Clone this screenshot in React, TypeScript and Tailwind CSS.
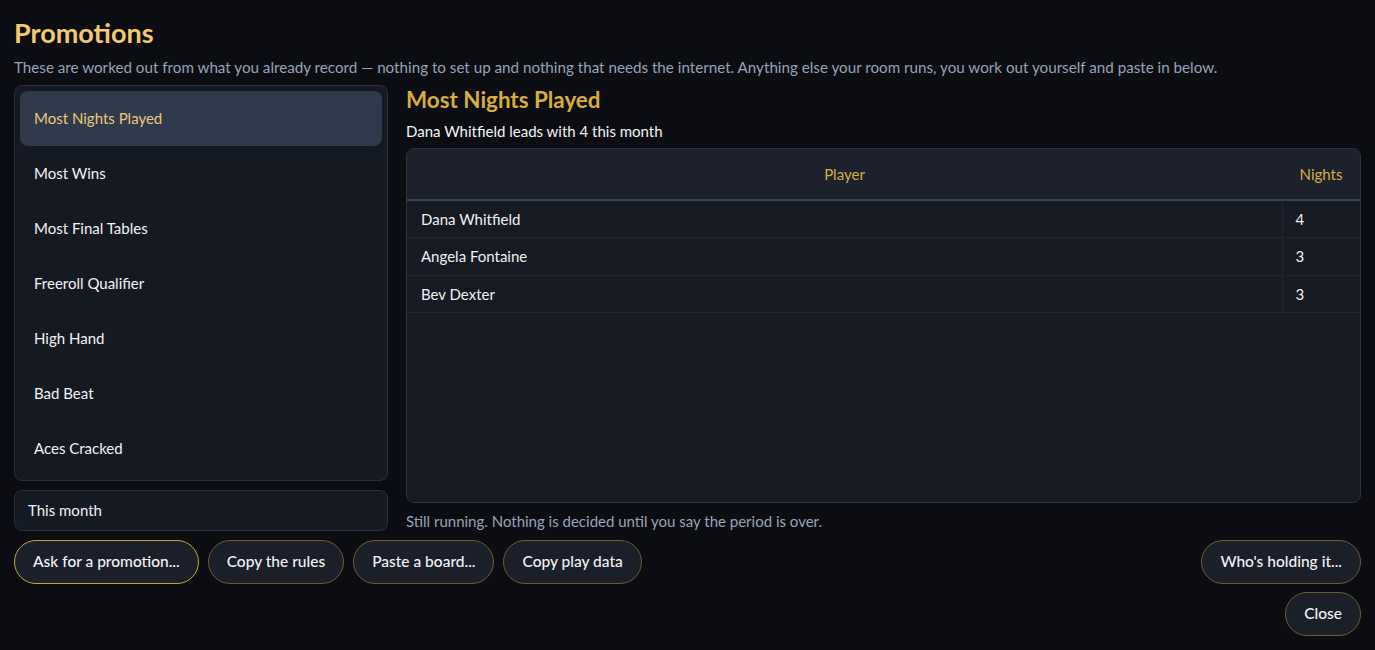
const promos = [
  "Most Nights Played",
  "Most Wins",
  "Most Final Tables",
  "Freeroll Qualifier",
  "High Hand",
  "Bad Beat",
  "Aces Cracked",
];

const rows = [
  { name: "Dana Whitfield", nights: 4 },
  { name: "Angela Fontaine", nights: 3 },
  { name: "Bev Dexter", nights: 3 },
];

function PillButton({ label, active }: { label: string; active?: boolean }) {
  return (
    <button
      className={
        "h-[44px] rounded-full bg-[#1a1f29] px-[18px] text-[15.5px] font-medium text-[#f1f3f7] border " +
        (active ? "border-[#c9a43c]" : "border-[#6f5c2a]")
      }
    >
      {label}
    </button>
  );
}

export default function App() {
  const selected = 0;
  return (
    <div className="min-h-screen bg-[#0b0d12] px-[14px] pt-[15px] font-['Lato','Noto_Sans',sans-serif] text-[#eef1f6]">
      <h1 className="text-[27px] font-bold leading-[36px] text-[#f4c86c]">Promotions</h1>
      <p className="mt-[6px] text-[15.2px] leading-[20px] text-[#98a3b7]">
        These are worked out from what you already record — nothing to set up and nothing that needs the
        internet. Anything else your room runs, you work out yourself and paste in below.
      </p>

      <div className="mt-[8px] flex gap-[18px]">
        <div className="flex w-[374px] shrink-0 flex-col gap-[9px]">
          <div className="h-[396px] rounded-lg border border-[#283040] bg-[#151922] p-[5px]">
            {promos.map((p, i) => (
              <div
                key={p}
                className={
                  "flex h-[55px] items-center rounded-lg px-[14px] text-[15px] " +
                  (i === selected ? "bg-[#313a4d] text-[#e9c978]" : "text-[#f1f3f7]")
                }
              >
                {p}
              </div>
            ))}
          </div>
          <div className="flex h-[41px] items-center rounded-lg border border-[#283040] bg-[#151922] px-[13px] text-[15px]">
            This month
          </div>
        </div>

        <div className="flex flex-1 flex-col">
          <h2 className="text-[22.4px] font-bold leading-[30px] text-[#d9ad3c]">Most Nights Played</h2>
          <p className="mt-[6px] text-[15px] leading-[20px] text-[#f3f5f8]">Dana Whitfield leads with 4 this month</p>
          <div className="mt-[7px] h-[355px] overflow-hidden rounded-lg border border-[#2a3140] bg-[#161a22]">
            <table className="w-full border-collapse text-[15px]">
              <thead>
                <tr className="h-[51px] border-b-2 border-[#3a4252] bg-[#1c212c] text-[#d9ad3c]">
                  <th className="font-normal">Player</th>
                  <th className="w-[78px] font-normal">Nights</th>
                </tr>
              </thead>
              <tbody>
                {rows.map((r) => (
                  <tr key={r.name} className="h-[37.5px] border-b border-[#1f2430]">
                    <td className="px-[14px]">{r.name}</td>
                    <td className="border-l border-[#1f2430] px-[13px]">{r.nights}</td>
                  </tr>
                ))}
              </tbody>
            </table>
          </div>
          <p className="mt-[8px] text-[15px] leading-[20px] text-[#98a3b7]">
            Still running. Nothing is decided until you say the period is over.
          </p>
        </div>
      </div>

      <div className="mt-[9px] flex items-center justify-between">
        <div className="flex gap-[9px]">
          <PillButton label="Ask for a promotion..." active />
          <PillButton label="Copy the rules" />
          <PillButton label="Paste a board..." />
          <PillButton label="Copy play data" />
        </div>
        <PillButton label="Who's holding it..." />
      </div>
      <div className="mt-[8px] flex justify-end">
        <PillButton label="Close" />
      </div>
    </div>
  );
}
